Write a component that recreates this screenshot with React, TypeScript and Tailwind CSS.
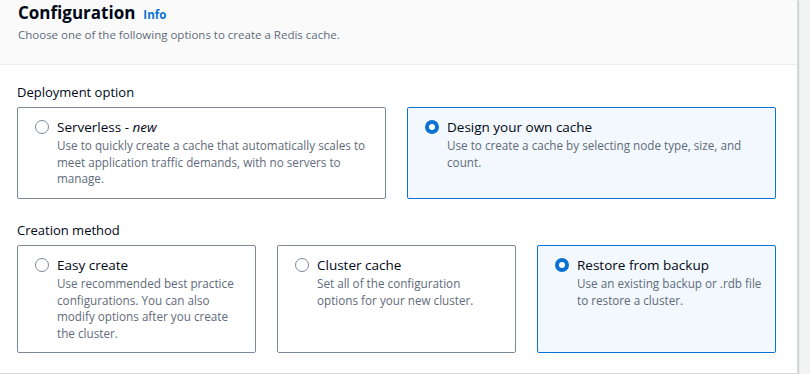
import React from "react"

type Option = {
  title: React.ReactNode
  desc: string
  selected?: boolean
}

function Radio({ checked }: { checked?: boolean }) {
  if (checked) {
    return (
      <span className="mt-[3px] flex h-[14px] w-[14px] shrink-0 items-center justify-center rounded-full bg-[#0972d3]">
        <span className="h-[6px] w-[6px] rounded-full bg-white" />
      </span>
    )
  }
  return <span className="mt-[3px] h-[14px] w-[14px] shrink-0 rounded-full border-[1.5px] border-[#7d8998] bg-white" />
}

function Tile({ opt, className }: { opt: Option; className: string }) {
  return (
    <div
      className={`${className} rounded-[2px] border pl-[17px] pr-[12px] pt-[9px] ${
        opt.selected ? "border-[#0972d3] bg-[#f2f8fd]" : "border-[#7d8998] bg-white"
      }`}
    >
      <div className="flex gap-[8px]">
        <Radio checked={opt.selected} />
        <div>
          <div className="text-[13.5px] leading-[20px] text-[#000716]">{opt.title}</div>
          <div className="text-[11.7px] leading-[16.5px] text-[#5f6b7a]">{opt.desc}</div>
        </div>
      </div>
    </div>
  )
}

const deployment: Option[] = [
  {
    title: (
      <>
        Serverless - <i>new</i>
      </>
    ),
    desc: "Use to quickly create a cache that automatically scales to meet application traffic demands, with no servers to manage.",
  },
  {
    title: "Design your own cache",
    desc: "Use to create a cache by selecting node type, size, and count.",
    selected: true,
  },
]

const creation: Option[] = [
  {
    title: "Easy create",
    desc: "Use recommended best practice configurations. You can also modify options after you create the cluster.",
  },
  {
    title: "Cluster cache",
    desc: "Set all of the configuration options for your new cluster.",
  },
  {
    title: "Restore from backup",
    desc: "Use an existing backup or .rdb file to restore a cluster.",
    selected: true,
  },
]

export default function App() {
  return (
    <div
      className="flex h-[374px] w-[810px] overflow-hidden bg-[#f2f3f3]"
      style={{ fontFamily: '"Open Sans", "Noto Sans", sans-serif' }}
    >
      <div className="w-[798px] shrink-0 border-r border-b border-[#d5dbdb] bg-white shadow-[1px_1px_1px_rgba(0,28,36,0.15)]">
        {/* header */}
        <div className="h-[65px] border-b border-[#e9ebed] bg-[#fafafa] px-[18px]">
          <div className="flex items-baseline gap-[8px]">
            <h2 className="text-[17px] leading-[26px] font-bold text-[#000716]">Configuration</h2>
            <span className="text-[11.5px] font-bold text-[#0972d3]">Info</span>
          </div>
          <p className="mt-[1px] text-[11.5px] leading-[16px] text-[#5f6b7a]">
            Choose one of the following options to create a Redis cache.
          </p>
        </div>

        {/* body */}
        <div className="pl-[17px] pr-[21px] pt-[18px]">
          <div className="text-[13px] leading-[18px] text-[#000716]">Deployment option</div>
          <div className="mt-[6px] flex gap-[21px]">
            {deployment.map((o, i) => (
              <Tile key={i} opt={o} className="h-[92px] w-[370px]" />
            ))}
          </div>

          <div className="mt-[22px] text-[13px] leading-[18px] text-[#000716]">Creation method</div>
          <div className="mt-[6px] flex gap-[21px]">
            {creation.map((o, i) => (
              <Tile key={i} opt={o} className="h-[108px] w-[239px]" />
            ))}
          </div>
        </div>
      </div>
    </div>
  )
}
